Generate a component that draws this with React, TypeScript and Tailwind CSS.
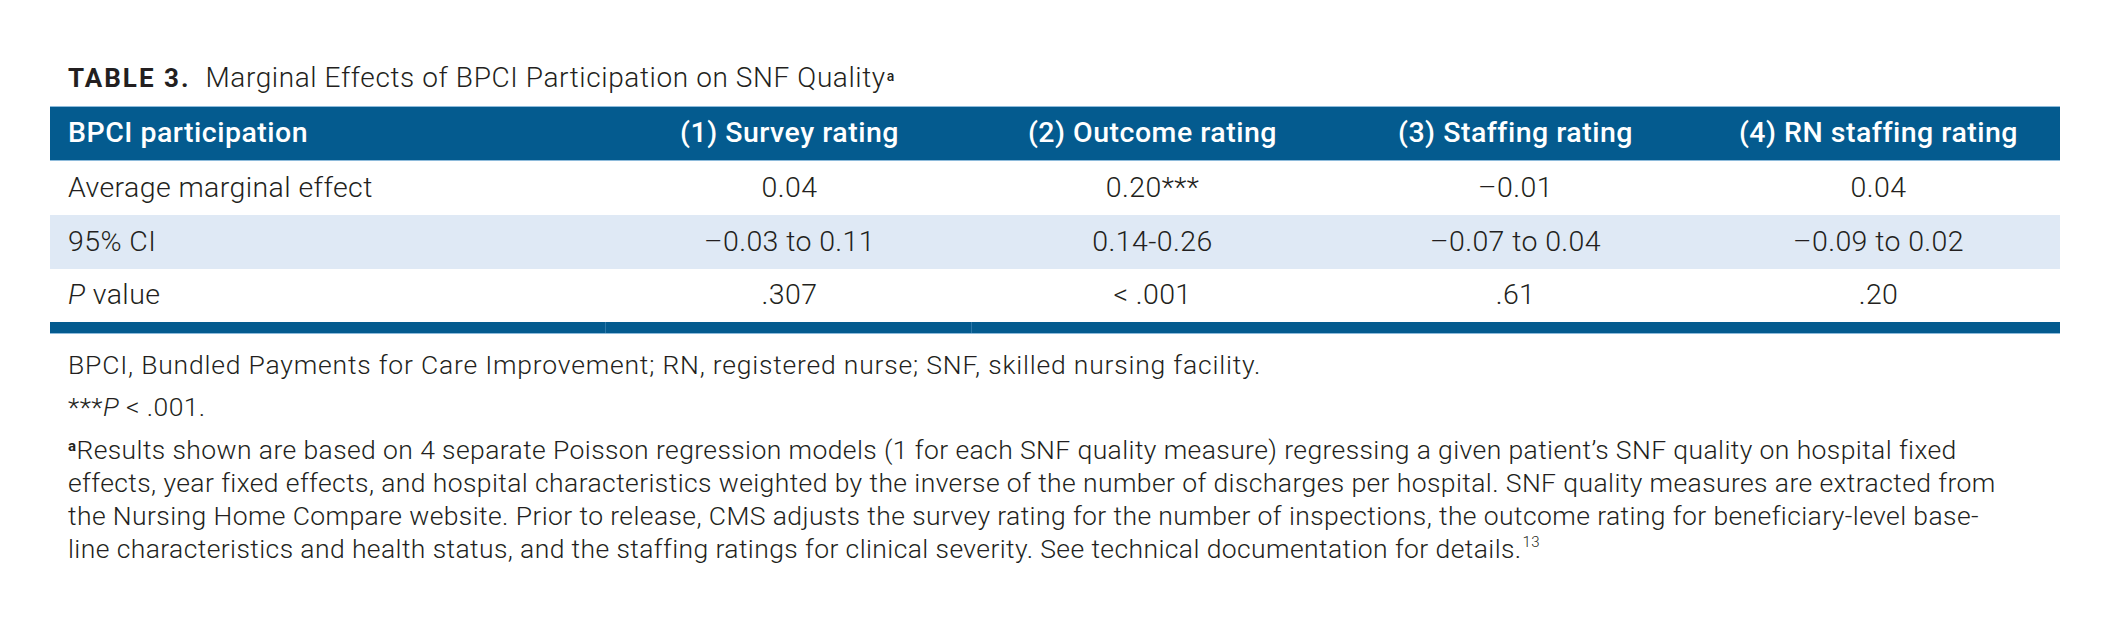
import React from "react";

const font = { fontFamily: "Roboto, 'Liberation Sans', Arial, sans-serif" };

const rows: { label: React.ReactNode; vals: string[]; shade: boolean; h: string }[] = [
  { label: "Average marginal effect", vals: ["0.04", "0.20***", "–0.01", "0.04"], shade: false, h: "h-[54px]" },
  { label: "95% CI", vals: ["–0.03 to 0.11", "0.14-0.26", "–0.07 to 0.04", "–0.09 to 0.02"], shade: true, h: "h-[54px]" },
  {
    label: (
      <>
        <i>P</i> value
      </>
    ),
    vals: [".307", "< .001", ".61", ".20"],
    shade: false,
    h: "h-[53px]",
  },
];

const headers = ["(1) Survey rating", "(2) Outcome rating", "(3) Staffing rating", "(4) RN staffing rating"];

export default function App() {
  return (
    <div className="w-[2113px] h-[624px] bg-white text-[#231f20] pl-[50px] pt-[65px]" style={font}>
      {/* Title */}
      <div className="pl-[18px] h-[26px] leading-[26px] whitespace-nowrap mb-[15px] flex items-start">
        <span className="font-bold tracking-[2px] text-[26px]">TABLE 3.</span>
        <span className="font-light text-[28px] tracking-[0.6px] ml-[15px]">Marginal Effects of BPCI Participation on SNF Quality</span>
        <span className="text-[14px] leading-[14px] font-medium ml-[1px] mt-[4px]">a</span>
      </div>

      {/* Table */}
      <div className="w-[2010px]">
        <div className="flex h-[55px] items-center bg-[#045b8f] border-t border-b border-[#8ebbdb] text-white text-[28.5px] tracking-[0.5px] font-medium">
          <div className="w-[558px] pl-[18px]">BPCI participation</div>
          {headers.map((h) => (
            <div key={h} className="w-[363px] text-center whitespace-nowrap">
              {h}
            </div>
          ))}
        </div>
        {rows.map((r, i) => (
          <div
            key={i}
            className={`flex items-center ${r.h} text-[28.5px] tracking-[0.4px] font-light ${r.shade ? "bg-[#dfe9f5]" : "bg-white"}`}
          >
            <div className="w-[558px] pl-[18px] whitespace-nowrap">{r.label}</div>
            {r.vals.map((v, j) => (
              <div key={j} className="w-[363px] text-center whitespace-nowrap">
                {v}
              </div>
            ))}
          </div>
        ))}
        <div className="flex h-[12px] bg-[#045b8f] border-b border-[#8ebbdb]">
          <div className="w-[556px] border-r border-[#2d77a8]" />
          <div className="w-[366px] border-r border-[#2d77a8]" />
          <div className="flex-1" />
        </div>
      </div>

      {/* Footnotes */}
      <div className="pl-[18px] text-[26.5px] tracking-[0.4px] leading-[33px] font-light mt-[14px] whitespace-nowrap">
        <div className="tracking-[0.8px]">BPCI, Bundled Payments for Care Improvement; RN, registered nurse; SNF, skilled nursing facility.</div>
        <div className="mt-[9px]">
          ***<i>P</i> &lt; .001.
        </div>
        <div className="mt-[10px]">
          <div>
            <span className="inline-block align-top text-[15px] leading-[15px] font-bold mt-[6px]">a</span>Results shown are based on 4 separate Poisson regression models (1 for each SNF quality measure) regressing a given patient’s SNF quality on hospital fixed
          </div>
          <div>
            effects, year fixed effects, and hospital characteristics weighted by the inverse of the number of discharges per hospital. SNF quality measures are extracted from
          </div>
          <div>
            the Nursing Home Compare website. Prior to release, CMS adjusts the survey rating for the number of inspections, the outcome rating for beneficiary-level base-
          </div>
          <div>
            line characteristics and health status, and the staffing ratings for clinical severity. See technical documentation for details.
            <span className="inline-block align-top text-[15px] leading-[15px] mt-[3px] ml-[1px]">13</span>
          </div>
        </div>
      </div>
    </div>
  );
}
